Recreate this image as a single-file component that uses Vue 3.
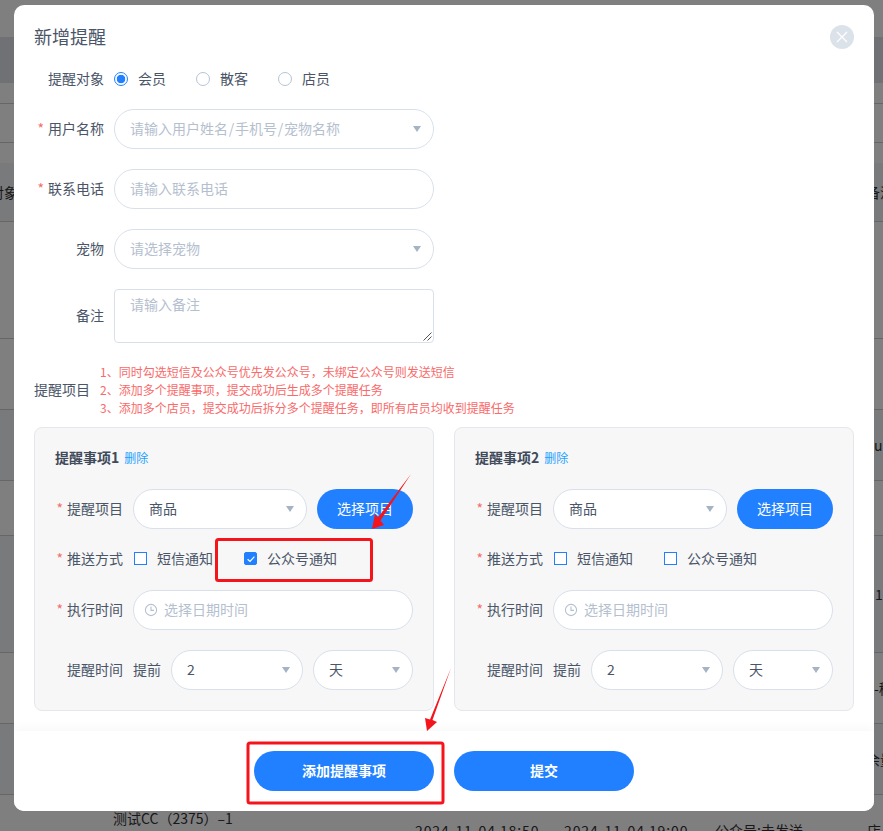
<script setup>
const rows = [
  { h: 37 },
  { h: 46, shade: 'head', left: '提醒记' },
  { h: 21, line: true },
  { h: 39, line: true },
  { h: 20 },
  { h: 59, shade: 'row', left: '对象', right: '备注', w: 17, line: true },
  { h: 117, line: true },
  { h: 71, line: true },
  { h: 71, shade: 'row', right: 'ul', w: 9, line: true },
  { h: 55, line: true },
  { h: 117, shade: 'row', right: '1', w: 8, line: true },
  { h: 71, right: '-稍', w: 9, line: true },
  { h: 71, shade: 'row', right: '余量', w: 17, line: true }
]
const radios = [
  { label: '会员', on: true },
  { label: '散客', on: false },
  { label: '店员', on: false }
]
const tips = [
  '1、同时勾选短信及公众号优先发公众号，未绑定公众号则发送短信',
  '2、添加多个提醒事项，提交成功后生成多个提醒任务',
  '3、添加多个店员，提交成功后拆分多个提醒任务，即所有店员均收到提醒任务'
]
const cards = [
  { title: '提醒事项1', sms: false, wx: true },
  { title: '提醒事项2', sms: false, wx: false }
]
</script>

<template>
  <div class="page">
    <div class="table">
      <div
        v-for="(r, i) in rows"
        :key="i"
        class="trow"
        :class="[r.shade, { line: r.line }]"
        :style="{ height: r.h + 'px' }"
      >
        <span class="cell-left">{{ r.left }}</span>
        <span class="cell-right" :style="{ width: (r.w || 9) + 'px' }">{{ r.right }}</span>
      </div>
      <div class="tlast">
        <span class="c1">测试CC（2375）–1</span>
        <span class="c2">2024-11-04 18:50</span>
        <span class="c3">2024-11-04 19:00</span>
        <span class="c4">公众号:未发送</span>
        <span class="c5">店员</span>
      </div>
    </div>

    <div class="mask">
      <div class="dialog">
        <header class="head">
          <h2 class="title">新增提醒</h2>
          <span class="close">
            <svg width="12" height="12" viewBox="0 0 12 12">
              <path d="M1 1 11 11M11 1 1 11" stroke="#fff" stroke-width="1.3" fill="none" />
            </svg>
          </span>
        </header>

        <div class="body">
          <div class="frow radio-row">
            <label class="flabel">提醒对象</label>
            <div class="radios">
              <span v-for="r in radios" :key="r.label" class="radio-item">
                <i class="radio" :class="{ on: r.on }"></i>{{ r.label }}
              </span>
            </div>
          </div>

          <div class="frow">
            <label class="flabel req">用户名称</label>
            <div class="input select">
              <span class="ph">请输入用户姓名<span class="slash">/</span>手机号<span class="slash">/</span>宠物名称</span><i class="caret"></i>
            </div>
          </div>
          <div class="frow">
            <label class="flabel req">联系电话</label>
            <div class="input"><span class="ph">请输入联系电话</span></div>
          </div>
          <div class="frow">
            <label class="flabel">宠物</label>
            <div class="input select"><span class="ph">请选择宠物</span><i class="caret"></i></div>
          </div>
          <div class="frow note-row">
            <label class="flabel">备注</label>
            <div class="textarea">
              <span class="note-ph">请输入备注</span>
              <svg class="grip" width="9" height="9" viewBox="0 0 9 9">
                <path d="M0.500 8.500 8.500 0.500M4.500 8.500 8.500 4.500" stroke="#555" stroke-width="1" fill="none" />
              </svg>
            </div>
          </div>

          <div class="tips-row">
            <label class="tips-label">提醒项目</label>
            <div class="tips">
              <div v-for="t in tips" :key="t">{{ t }}</div>
            </div>
          </div>

          <div class="cards">
            <section v-for="c in cards" :key="c.title" class="card">
              <div class="card-title">
                <b>{{ c.title }}</b><a class="del">删除</a>
              </div>
              <div class="crow">
                <label class="clabel req">提醒项目</label>
                <div class="input select item-select"><span class="val">商品</span><i class="caret"></i></div>
                <button class="btn pick">选择项目</button>
              </div>
              <div class="crow check-row">
                <label class="clabel req">推送方式</label>
                <span class="check-item first">
                  <i class="check" :class="{ on: c.sms }"></i>短信通知
                </span>
                <span class="check-item">
                  <i class="check" :class="{ on: c.wx }">
                    <svg v-if="c.wx" width="10" height="10" viewBox="0 0 10 10">
                      <path d="M1.600 5.200 4 7.400 8.400 2.600" stroke="#fff" stroke-width="1.2" fill="none" />
                    </svg>
                  </i>公众号通知
                </span>
              </div>
              <div class="crow">
                <label class="clabel req">执行时间</label>
                <div class="input date">
                  <svg class="clock" width="14" height="14" viewBox="0 0 14 14">
                    <circle cx="7" cy="7" r="5.600" stroke="#b5c0cf" stroke-width="1.1" fill="none" />
                    <path d="M7 3.600V7.400H10" stroke="#b5c0cf" stroke-width="1.1" fill="none" />
                  </svg>
                  <span class="ph">选择日期时间</span>
                </div>
              </div>
              <div class="crow last">
                <label class="clabel">提醒时间</label>
                <span class="before">提前</span>
                <div class="input select num"><span class="val">2</span><i class="caret"></i></div>
                <div class="input select unit"><span class="val">天</span><i class="caret"></i></div>
              </div>
            </section>
          </div>
        </div>

        <footer class="foot">
          <button class="btn wide">添加提醒事项</button>
          <button class="btn wide">提交</button>
        </footer>
      </div>
    </div>

    <svg class="marks" width="883" height="831" viewBox="0 0 883 831">
      <rect x="216.500" y="539.500" width="155" height="41" rx="2" fill="none" stroke="#f5141c" stroke-width="3" />
      <rect x="248" y="743" width="195" height="60" rx="2" fill="none" stroke="#f5141c" stroke-width="3" />
      <path d="M411 474 380.500 520.500 384 525 372 529 375 514 378 517.500Z" fill="#f5141c" />
      <path d="M451 668 432.500 720 437 722 427 731 425 718 430 719.500Z" fill="#f5141c" />
    </svg>
  </div>
</template>

<style>
html, body { margin: 0; padding: 0; }
</style>

<style scoped>
.page {
  position: relative;
  width: 883px;
  height: 831px;
  overflow: hidden;
  background: #fff;
  font-family: "Noto Sans CJK SC", "Liberation Sans", sans-serif;
  font-size: 14px;
  color: #4a5568;
}
.table { width: 883px; color: #303133; }
.trow {
  display: flex;
  justify-content: space-between;
  align-items: center;
  box-sizing: border-box;
}
.trow.line { border-bottom: 1px solid #ccc; }
.trow.head { background: #dfe3e8; }
.trow.row { background: #f2f4f7; }
.cell-left {
  width: 18px;
  display: flex;
  justify-content: flex-end;
  white-space: nowrap;
  overflow: hidden;
}
.cell-right { white-space: nowrap; overflow: hidden; }
.tlast { display: flex; padding-left: 113px; white-space: nowrap; }
.tlast span { display: block; flex: none; }
.c1 { width: 302px; padding-top: 13px; }
.c2, .c3, .c4, .c5 { padding-top: 25px; }
.c2 { width: 149px; letter-spacing: 0.9px; }
.c3 { width: 151px; letter-spacing: 0.9px; }
.c4 { width: 152px; }

.mask {
  position: absolute;
  inset: 0;
  background: rgba(0, 0, 0, 0.5);
  padding: 5px 0 0 14px;
  box-sizing: border-box;
}
.dialog {
  width: 860px;
  height: 806px;
  background: #fff;
  border-radius: 10px;
  display: flex;
  flex-direction: column;
  overflow: hidden;
}
.head {
  height: 64px;
  flex: none;
  padding: 0 20px;
  display: flex;
  align-items: center;
  justify-content: space-between;
}
.title { margin: 0 0 2px; font-size: 18px; font-weight: 400; color: #4a5568; }
.close {
  width: 24px;
  height: 24px;
  border-radius: 50%;
  background: #dbe2ea;
  display: flex;
  align-items: center;
  justify-content: center;
}
.body { flex: 1; padding: 0 20px; overflow: hidden; }
.frow { display: flex; align-items: center; height: 40px; margin-bottom: 20px; }
.radio-row { height: 20px; }
.note-row { height: 54px; }
.flabel {
  width: 70px;
  margin-right: 10px;
  padding-bottom: 2px;
  flex: none;
  text-align: right;
  white-space: nowrap;
}
.req::before { content: "*"; color: #f56c6c; margin-right: 4px; }
.radios { display: flex; }
.radio-item { display: flex; align-items: center; width: 82px; padding-bottom: 2px; }
.radio {
  width: 14px;
  height: 14px;
  box-sizing: border-box;
  border: 1px solid #b5c4d6;
  border-radius: 50%;
  margin-right: 10px;
  background: #fff;
  margin-top: 1px;
}
.radio.on { border-color: #2080ff; background: radial-gradient(circle, #2080ff 0 4px, #fff 4.6px); }
.input {
  box-sizing: border-box;
  height: 40px;
  width: 320px;
  border: 1px solid #d8e0ea;
  border-radius: 20px;
  background: #fff;
  padding: 0 15px;
  display: flex;
  align-items: center;
  justify-content: space-between;
  flex: none;
}
.ph { color: #b5c0cf; padding-bottom: 2px; }
.slash { padding: 0 0.75px; }
.val { color: #4a5568; padding-bottom: 2px; }
.caret {
  width: 0;
  height: 0;
  border-left: 4.5px solid transparent;
  border-right: 4.5px solid transparent;
  border-top: 6px solid #a6b3c4;
  margin-right: -2.5px;
}
.textarea {
  position: relative;
  box-sizing: border-box;
  width: 320px;
  height: 54px;
  border: 1px solid #d8e0ea;
  border-radius: 4px;
  padding: 4px 15px;
  line-height: 20px;
}
.note-ph { color: #b5c0cf; }
.grip { position: absolute; right: 1px; bottom: 1px; }
.tips-row { display: flex; align-items: center; margin-bottom: 10px; }
.tips-label { width: 56px; margin-right: 10px; padding-bottom: 3px; flex: none; white-space: nowrap; }
.tips { color: #f96a6a; font-size: 12px; line-height: 18px; white-space: nowrap; }
.cards { display: flex; gap: 20px; }
.card {
  box-sizing: border-box;
  width: 400px;
  height: 284px;
  border: 1px solid #e4e7ed;
  border-radius: 8px;
  background: #f7f7f7;
  padding: 20px;
}
.card-title {
  height: 20px;
  line-height: 18px;
  margin-bottom: 21px;
  color: #3f4a5a;
  white-space: nowrap;
}
.del { font-size: 12px; color: #1e9fff; margin-left: 5px; }
.crow { display: flex; align-items: center; height: 40px; margin-bottom: 20px; }
.crow.last { margin-bottom: 0; }
.check-row { height: 21px; }
.clabel { width: 68px; margin-right: 10px; padding-bottom: 3px; flex: none; text-align: right; white-space: nowrap; }
.item-select { width: 174px; margin-right: 10px; }
.date { width: 280px; justify-content: flex-start; padding-left: 10px; }
.clock { margin-right: 6px; }
.before { width: 28px; margin-right: 10px; padding-bottom: 3px; flex: none; white-space: nowrap; }
.num { width: 132px; margin-right: 10px; }
.unit { width: 100px; }
.check-row .clabel { padding-bottom: 4px; }
.check-item { display: flex; align-items: center; white-space: nowrap; padding-bottom: 4px; }
.check-item.first { margin-left: 1px; width: 110px; }
.check {
  width: 13px;
  height: 13px;
  box-sizing: border-box;
  border: 1px solid #2080ff;
  background: #fff;
  margin-right: 10px;
  margin-top: 2px;
  display: flex;
  align-items: center;
  justify-content: center;
}
.check.on { background: #2080ff; border-radius: 2px; }
.btn {
  border: 0;
  height: 40px;
  border-radius: 20px;
  background: #2080ff;
  color: #fff;
  font: inherit;
  padding: 0 0 2px;
  flex: none;
}
.pick { width: 96px; }
.foot {
  height: 80px;
  flex: none;
  box-sizing: border-box;
  background: #fff;
  box-shadow: 0 -3px 10px rgba(0, 0, 0, 0.03);
  position: relative;
  display: flex;
  justify-content: center;
  align-items: center;
  gap: 20px;
}
.wide { width: 180px; font-weight: 700; }
.marks { position: absolute; left: 0; top: 0; pointer-events: none; }
</style>
